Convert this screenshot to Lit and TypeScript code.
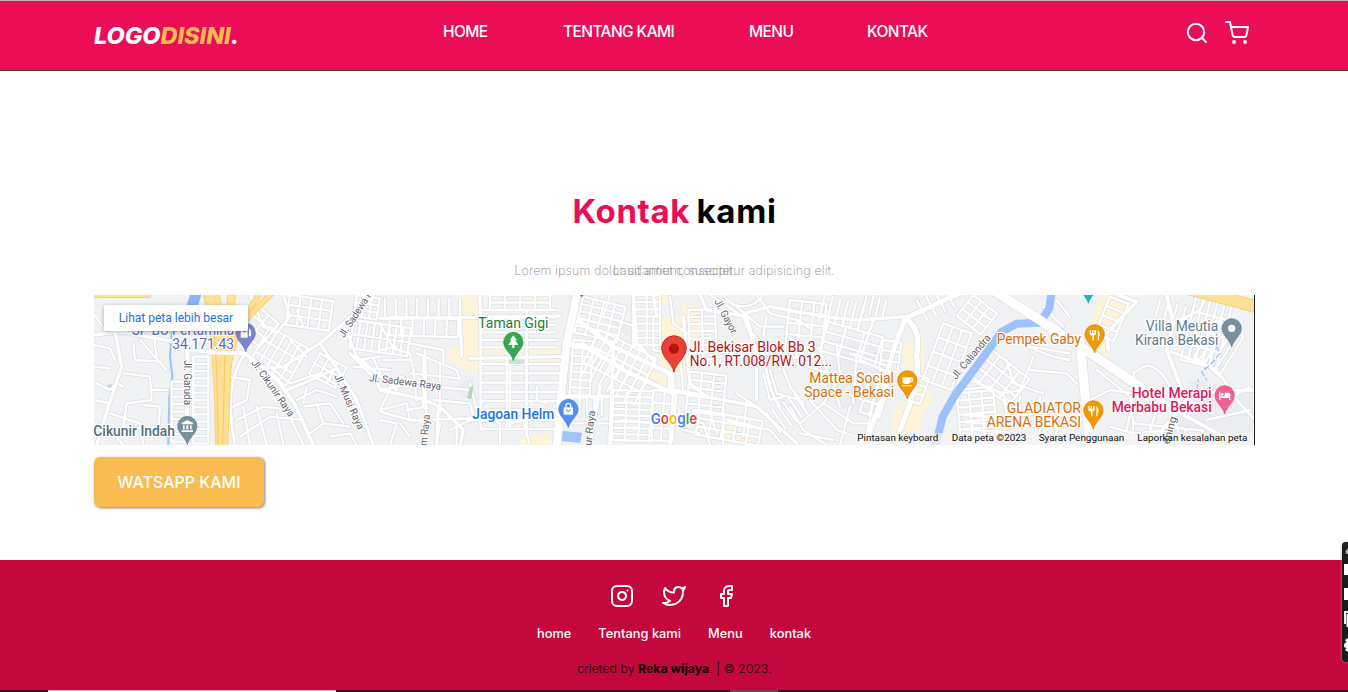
import { LitElement, html, svg, css } from "lit";
import { customElement } from "lit/decorators.js";

const FONT = css`Inter, "Open Sans", sans-serif`;

type Road = [number, string];

/* Parallel streets plus their cross streets, rotated around the block's corner. */
function block(x: number, y: number, w: number, h: number, nx: number, ny: number, deg = 0): string {
  const a = (deg * Math.PI) / 180;
  const c = Math.cos(a);
  const s = Math.sin(a);
  const p = (u: number, v: number) => `${(x + u * c - v * s).toFixed(1)} ${(y + u * s + v * c).toFixed(1)}`;
  let d = "";
  for (let i = 0; i <= nx; i++) {
    const u = (w * i) / Math.max(nx, 1);
    if (nx > 0) d += `M${p(u, 0)}L${p(u, h)}`;
  }
  for (let j = 0; j <= ny; j++) {
    const v = (h * j) / Math.max(ny, 1);
    if (ny > 0) d += `M${p(0, v)}L${p(w, v)}`;
  }
  return d;
}

const STREETS: Road[] = [
  [7, block(310, 200, 45, 260, 1, 12)],
  [7, block(245, 275, 45, 180, 1, 8)],
  [7, "M12 165L60 175L75 210M12 230L60 235M15 75L50 130M60 60L95 130M130 160L135 210L215 215M100 250L180 260L185 330L110 340M185 300L230 300M12 330L60 340M60 370L150 400L160 465M110 340L100 410L200 420M70 430L100 465M150 150L230 240M190 120L200 200"],
  [7, "M160 345L210 350L205 410M20 280L60 300L80 280L100 290M12 400L45 410"],
  [7, block(540, 110, 130, 130, 5, 3, 30)],
  [7, block(505, 50, 80, 90, 2, 3, 40)],
  [7, block(600, 15, 130, 90, 4, 3, 8)],
  [7, "M480 15L520 110L560 130M580 15L600 80L560 130M540 230L600 280L690 250L760 300M640 110L620 60M650 200L600 150"],
  [7, "M415 260L480 270L470 330L430 350M440 390L520 350L600 360M450 440L540 380L640 390M460 350L480 465M500 350L530 465M560 370L580 465M600 380L640 465M640 350L720 340L760 400M620 330L680 300L740 320M680 340L700 400L660 430M700 400L780 410M720 440L780 430L800 465M650 290L640 340"],
  [7, block(690, 190, 90, 70, 3, 2, 28)],
  [7, block(790, 90, 175, 85, 8, 2, 8)],
  [7, block(800, 15, 70, 65, 3, 3, 8)],
  [7, "M800 210L870 200M790 230L900 240M820 210L835 250M850 205L870 250M900 300L870 360L950 340L960 390L1030 400M870 390L920 400L900 465M950 360L1010 350L1000 310M1000 400L1010 465M1050 400L1040 465M930 400L960 440"],
  [7, block(885, 25, 225, 60, 7, 0)],
  [7, block(900, 80, 205, 55, 6, 1, 2)],
  [7, "M870 100L910 175L960 190L970 240M960 160L1060 180L1060 220M870 180L920 170M880 210L960 210M980 190L1100 240L1110 270M960 250L1110 265M1000 195L1000 350M1050 220L1050 370M970 240L980 330M930 260L1030 290L1140 300M1030 330L1140 340L1150 380"],
  [7, block(1172, 60, 225, 112, 0, 5)],
  [7, block(1172, 222, 245, 195, 0, 7)],
  [7, block(1250, 200, 60, 210, 1, 0)],
  [7, block(1200, 15, 180, 45, 4, 2)],
  [8, "M1172 30L1172 420M1310 60L1310 440"],
  [7, "M1140 280L1160 360L1200 380M1110 385L1300 370M1080 420L1140 390L1230 395L1230 465M1260 400L1300 390L1320 465M1340 290L1340 330L1370 340M1100 400L1100 465"],
  [7, block(1450, 150, 60, 165, 2, 7, 4)],
  [7, block(1425, 315, 110, 60, 5, 0)],
  [7, block(1480, 20, 130, 110, 4, 5, 14)],
  [7, block(1530, 120, 190, 110, 7, 2, 27)],
  [7, block(1510, 190, 180, 80, 6, 0, 28)],
  [7, block(1570, 300, 120, 150, 3, 8, 2)],
  [7, block(1630, 15, 80, 150, 2, 7)],
  [7, block(1690, 300, 70, 150, 2, 4, 5)],
  [7, "M1740 20L1750 100L1790 130M1690 80L1690 180L1800 200M1770 190L1780 310M1750 250L1750 300L1770 310M1560 15L1540 80L1640 110M1440 400L1560 400M1600 390L1700 400"],
  [7, block(1795, 60, 80, 150, 2, 7, -2)],
  [7, block(1800, 245, 110, 120, 3, 5, 6)],
  [7, "M1900 15C1930 60 1990 60 2020 15M1860 15L1960 80L1990 160L2020 200M1940 50L2010 110L2080 110M2000 15L2040 70L2120 90L2170 120M2030 80L2020 140L2070 240M2000 180C2010 140 2060 170 2070 210L2100 290L2140 340M2040 240L2060 310L2130 330L2150 370M2020 250L2040 330L2080 320"],
  [7, block(2100, 30, 110, 170, 3, 5, 6)],
  [7, block(2205, 15, 120, 80, 5, 0, 14)],
  [7, block(2215, 95, 170, 90, 3, 3, 16)],
  [7, block(2330, 15, 60, 55, 3, 0, 12)],
  [7, "M2120 220L2220 250L2250 350M2240 160L2250 260L2200 340L2130 400M2280 190L2400 230M2240 300L2350 340L2330 430M2160 330L2240 420L2300 440M2100 350L2140 420L2210 465M2200 340L2290 400L2350 400M2300 190L2290 340M2280 350L2250 465M2130 430L2230 450"],
  [7, block(1830, 360, 190, 75, 5, 3, 10)],
  [7, block(2030, 370, 100, 70, 5, 0, -35)],
  [7, "M1760 380L1840 400L1860 465M1810 360L1860 370L1880 430M1780 420L1830 430M1910 390L2040 420L2080 465M1970 330L1960 440M1900 360L1900 465M1940 310L2000 350"],
  [7, block(2380, 150, 55, 90, 1, 3, 8)],
  [7, block(2340, 260, 60, 110, 2, 3, 16)],
  [7, block(2470, 250, 50, 80, 1, 3, 20)],
  [7, block(2560, 100, 90, 180, 3, 4, 20)],
  [7, block(2480, 30, 90, 70, 3, 0, -28)],
  [7, block(2600, 310, 110, 130, 3, 6, -5)],
  [7, block(2700, 175, 150, 100, 4, 3, 38)],
  [7, block(2650, 15, 90, 80, 3, 3, 38)],
  [7, "M2610 300L2700 290L2780 350L2850 330M2640 270L2740 310L2790 300L2830 200M2750 210L2770 280L2860 310M2810 170L2890 200L2940 210M2820 240L2930 250L2960 280M2790 130L2820 170L2940 190M2870 110L2890 150M2860 50L2920 110M2900 30L2940 80M2740 310L2750 380L2960 360M2740 410L2950 405M2790 320L2790 440M2850 320L2850 430M2900 360L2900 440"],
  [7, block(3060, 20, 60, 120, 1, 4, 22)],
  [7, block(2620, 375, 140, 85, 0, 4, 4)],
  [7, "M3130 250L3160 230C3190 220 3220 250 3240 290L3280 350L3370 370M3130 250L3140 290M3020 240L3120 320L3130 400M3000 330L3060 300L3130 310M3060 410L3130 430L3240 420M3130 330L3100 465M3210 330L3180 420M3260 400L3270 465M3390 340L3480 290M3350 390L3480 360"],
  [7, block(3320, 15, 110, 200, 5, 4, 14)],
  [7, block(3380, 90, 95, 130, 5, 1, 32)],
  [7, block(3210, 30, 80, 50, 3, 0, 15)],
  [7, block(3130, 400, 210, 55, 4, 1, 6)],
  [10, "M12 135L90 125L280 160L300 182L465 190"],
  [10, "M75 125L95 230L55 350L20 465"],
  [12, "M292 175L292 465"],
  [12, "M465 190L560 265L615 345L670 465"],
  [9, "M462 195C420 260 410 340 435 465"],
  [10, "M850 20L760 100L690 160L740 235L800 330L850 465"],
  [9, "M690 160L580 230L520 235M740 235L640 280L590 300M770 120L800 200L920 300"],
  [10, "M780 190L860 270L870 300L990 325L1050 350L1120 420L1110 465"],
  [8, "M870 300L940 285M870 365L960 390L1170 385"],
  [10, "M870 85L1110 82L1410 78M1110 82L1115 200M1140 205L1410 200M1170 15L1172 100"],
  [9, "M1005 180L1010 465M1260 170L1260 410M1045 350L1040 465"],
  [24, "M1462 10L1430 160L1415 300L1400 470"],
  [14, "M1440 165L1480 165L1610 245L1750 310M1470 95L1570 170L1740 250L1740 300L1850 320"],
  [11, "M1630 15L1640 160L1690 210M1570 180L1560 465M1530 290L1500 465M1410 320L1560 320"],
  [10, "M1690 15L1700 80M1780 80L1800 280L1850 320L2000 350L2120 460M1750 310L1740 465"],
  [10, "M1830 15L1850 60L1970 80L2000 190M1960 70L2040 50L2200 80L2300 90L2450 80"],
  [9, "M1980 130C2040 150 2010 270 2070 350M2000 190L2000 330M2215 90L2190 180L2220 270M2350 90L2310 210L2400 250"],
  [15, "M2610 10L2445 85L2410 180L2370 340L2325 465"],
  [16, "M2445 85C2490 110 2485 160 2480 200C2490 260 2470 320 2430 420"],
  [28, "M2720 8L2960 162L3150 290"],
  [28, "M2970 155L2980 260L3000 470"],
  [11, "M3150 290L3290 380L3420 450M3085 15L3140 35L3050 130L3055 180"],
  [12, "M3230 15L3250 100L3230 180L3260 260L3290 330L3210 430M3260 310L3495 300"],
  [9, "M3230 180L3360 230L3390 260M3395 260L3440 330L3495 390M3260 95L3330 60L3350 15"],
];

const HIGHWAYS: Road[] = [
  [30, "M355 10C378 90 380 180 386 260S390 400 392 470"],
  [22, "M425 10L415 120C413 220 405 370 402 470"],
  [14, "M378 10L400 90L402 460"],
  [14, "M545 10L475 80C435 130 420 180 408 290"],
  [12, "M510 10L440 110C425 150 418 200 410 240"],
  [12, "M12 16L175 16"],
  [34, "M3280 -8L3510 53"],
];

const SAND = [
  "M1105 15H1165V180H1240V172H1410V190H1170V245L1120 235L1070 200L1080 172L1105 170Z",
  "M1170 206H1250V222H1170ZM1312 208H1410V222H1312ZM1312 175H1408V192H1312ZM1180 15H1230V28H1180ZM1300 15H1380L1360 40H1310Z",
  "M1295 435H1380V465H1290ZM1640 15H1750V42H1660ZM1710 80H1830V125H1840V160H1790V190H1800V260L1710 240ZM1650 230L1740 260V285L1690 290ZM1770 40L1820 50L1840 90H1780Z",
  "M1890 390L1940 385V430L1990 440L1980 460L1900 450Z",
  "M2430 160L2500 150V260L2530 330L2500 370L2490 420L2400 440L2410 360L2460 320L2450 240Z",
  "M3030 15H3140L3120 60L3080 100L3060 140L3000 120ZM2990 170L3050 160L3060 240L3000 215Z",
];

const INK = {
  green: "#188038",
  blue: "#1a73e8",
  red: "#b31412",
  orange: "#d56e0c",
  slate: "#607d8b",
  pink: "#e0185e",
  violet: "#5c6bc0",
};

/* x start, x end, baseline, colour, weight, text */
const LABELS: [number, number, number, string, number, string][] = [
  [125, 432, 136, INK.violet, 400, "SP BU Pertamina"],
  [247, 432, 177, INK.violet, 400, "34.171.43"],
  [10, 255, 437, "#546e7a", 500, "Cikunir Indah"],
  [1165, 1375, 114, INK.green, 400, "Taman Gigi"],
  [1147, 1393, 387, INK.blue, 500, "Jagoan Helm"],
  [1798, 2177, 186, INK.red, 400, "Jl. Bekisar Blok Bb 3"],
  [1799, 2226, 228, INK.red, 400, "No.1, RT.008/RW. 012..."],
  [2158, 2412, 280, INK.orange, 400, "Mattea Social"],
  [2143, 2412, 321, INK.orange, 400, "Space - Bekasi"],
  [2720, 2973, 163, INK.orange, 400, "Pempek Gaby"],
  [2750, 2973, 369, INK.orange, 400, "GLADIATOR"],
  [2690, 2973, 411, INK.orange, 400, "ARENA BEKASI"],
  [3167, 3385, 123, INK.slate, 400, "Villa Meutia"],
  [3135, 3385, 165, INK.slate, 400, "Kirana Bekasi"],
  [3125, 3365, 324, INK.pink, 500, "Hotel Merapi"],
  [3065, 3365, 366, INK.pink, 500, "Merbabu Bekasi"],
];

/* x, y, angle, length, text */
const STREET_NAMES: [number, number, number, number, string][] = [
  [762, 145, -57, 160, "Jl. Sadewa R"],
  [283, 211, 90, 134, "Jl. Garuda"],
  [483, 218, 55, 200, "Jl. Cikunir Raya"],
  [732, 258, 66, 178, "Jl. Musi Raya"],
  [836, 273, 7, 218, "Jl. Sadewa Raya"],
  [1010, 468, -84, 94, "m Raya"],
  [1504, 468, -84, 106, "ur Raya"],
  [1872, 34, 62, 112, "Jl. Gayor"],
  [2598, 270, -50, 164, "Jl. Caliandra"],
  [3238, 464, -75, 84, "ening"],
];

const LEGAL: [number, number, string][] = [
  [2302, 2545, "Pintasan keyboard"],
  [2585, 2809, "Data peta ©2023"],
  [2846, 3103, "Syarat Penggunaan"],
  [3142, 3472, "Laporkan kesalahan peta"],
];

const fork = svg`<path d="M-15 -69V-58Q-15 -53 -10 -53H-7V-38H-2V-53Q4 -53 4 -58V-69H-1V-60H-4V-69H-8V-60H-11V-69ZM9 -38V-69Q16 -65 16 -50H13V-38Z" fill="#fff"/>`;

const PINS: [number, number, number, string, string, unknown][] = [
  [467, 185, 1, "#7986cb", "#5c6bc0", svg`<path d="M-15 -42V-58L-8 -74H6V-42ZM10 -70L16 -64V-46H10Z" fill="#fff"/><path d="M-6 -66H2V-59H-9Z" fill="#7986cb"/>`],
  [292, 464, 1, "#78909c", "#607d8b", svg`<path d="M0 -74L17 -65V-61H-17V-65ZM-13 -58H-8V-46H-13ZM-3 -58H3V-46H-3ZM8 -58H13V-46H8ZM-17 -43H17V-38H-17Z" fill="#fff"/>`],
  [1270, 212, 1, "#34a853", "#1e8e3e", svg`<path d="M0 -76L11 -61H6L15 -47H3V-38H-3V-47H-15L-6 -61H-11Z" fill="#fff"/>`],
  [1435, 413, 1, "#4f8ff7", "#3b78e7", svg`<path d="M-14 -61H14V-39H-14Z" fill="#fff"/><path d="M-7 -61V-66A7 7 0 0 1 7 -66V-61" stroke="#fff" stroke-width="4" fill="none"/><path d="M-6 -55A6 6 0 0 0 6 -55" stroke="#4285f4" stroke-width="3" fill="none"/>`],
  [1752, 246, 1.28, "#ea4335", "#c5221f", svg`<circle cy="-55" r="12" fill="#b31412"/>`],
  [2452, 327, 1, "#f29900", "#e37400", svg`<path d="M-15 -65H11A7 7 0 0 1 11 -50H9Q6 -45 1 -45H-6Q-15 -46 -15 -55ZM10 -61V-54A3.500 3.500 0 0 0 10 -61ZM-16 -41H14V-38H-16Z" fill="#fff"/>`],
  [3014, 189, 1, "#f29900", "#e37400", fork],
  [3010, 417, 1, "#f29900", "#e37400", fork],
  [3425, 171, 1, "#78909c", "#607d8b", svg`<circle cy="-56" r="11" fill="#fff"/>`],
  [3404, 372, 1, "#f06292", "#e2447c", svg`<path d="M-17 -67H-13V-53H0V-64H12Q17 -64 17 -59V-42H13V-48H-13V-42H-17Z" fill="#fff"/><circle cx="-7" cy="-59" r="4" fill="#fff"/>`],
  [2995, 40, 1, "#12b5cb", "#129eaf", ""],
];

@customElement("area-map")
class AreaMap extends LitElement {
  static styles = css`
    :host { display: block; position: relative; height: 150px; overflow: hidden; background: #f1f2f4; }
    .map { display: block; width: 1161px; height: 150px; font-family: Roboto, sans-serif; }
    .casing { stroke: #dcdfe3; fill: none; }
    .lane { stroke: #fff; fill: none; }
    .edge { stroke: #f5ca62; fill: none; }
    .highway { stroke: #fde093; fill: none; }
    .water { stroke: #9dc1fa; fill: none; }
    .halo { paint-order: stroke; stroke: #fff; stroke-width: 7px; stroke-linejoin: round; }
    .label { font-size: 42px; }
    .street { font-size: 31px; fill: #5f6368; }
    .legal { font-size: 29px; fill: #111; }
    .brand { font: 600 45px Inter, sans-serif; }
    .open {
      position: absolute; left: 10px; top: 10px; width: 144px; height: 26px;
      display: flex; align-items: center; justify-content: center;
      font: 12px Roboto, sans-serif; color: #1a73e8; background: #fff;
      border-radius: 2px; box-shadow: 0 1px 4px rgba(0, 0, 0, .3); text-decoration: none;
    }
  `;

  render() {
    return html`
      <svg class="map" viewBox="12 15 3483 450" preserveAspectRatio="none" role="img" aria-label="Peta">
        <path d="M2240 150L2420 180L2360 400L2200 330ZM1540 80L1640 100V150L1560 110ZM3300 270L3495 300V440H3240ZM1110 280L1150 260L1160 340L1100 310Z" fill="#ebedf0"/>
        ${SAND.map((d) => svg`<path d=${d} fill="#fdf4da"/>`)}
        <path d="M50 285L68 282L65 297L52 300Z" fill="#c5dcd8"/>
        <path d="M302 10H335L325 45H290Z" fill="#8ab4f8"/>
        <path class="water" stroke-width="6" d="M290 45L245 130L240 200L247 260L238 320L235 465"/>
        <g stroke-linejoin="round" stroke-linecap="round">
          ${STREETS.map(([w, d]) => svg`<path class="casing" stroke-width=${w + 4.5} d=${d}/>`)}
          ${STREETS.map(([w, d]) => svg`<path class="lane" stroke-width=${w} d=${d}/>`)}
          <path class="water" stroke-width="24" d="M2536 470L2558 380L2595 315L2670 215L2735 125L2780 101L2850 98L2878 55L2884 10"/>
          <path class="lane" stroke-width="28" d="M2790 52L2900 123"/>
          <path class="water" stroke-width="4" stroke-dasharray="16 9" d="M3380 120L3375 160L3390 190L3360 225L3335 245L3350 270M3320 300L3325 270"/>
          ${HIGHWAYS.map(([w, d]) => svg`<path class="edge" stroke-width=${w + 4} d=${d}/>`)}
          ${HIGHWAYS.map(([w, d]) => svg`<path class="highway" stroke-width=${w} d=${d}/>`)}
          <path class="edge" stroke-width="3" d="M370 120C382 200 382 330 384 465M405 190L398 465"/>
          <path class="lane" stroke-width="11" d="M355 187L465 190"/>
        </g>
        <path d="M1257 208H1302V222H1257Z" fill="#c7e6cf"/>
        <path d="M1140 291L1150 287L1144 328L1131 324Z" fill="#a8dab5"/>
        <path d="M1418 423L1476 428L1471 459L1415 453Z" fill="#9fc3fb"/>
        <path d="M1469 15H1481L1475 22Z" fill="#4285f4"/>
        <path d="M2265 430H3495V465H2265Z" fill="#f5f5f5" fill-opacity=".76"/>
        ${STREET_NAMES.map(([x, y, a, len, t]) => svg`
          <text class="street halo" transform="translate(${x} ${y}) rotate(${a})" textLength=${len} lengthAdjust="spacingAndGlyphs">${t}</text>`)}
        ${PINS.map(([x, y, k, fill, edge, glyph]) => svg`
          <g transform="translate(${x} ${y}) scale(${k})">
            <path d="M0 0C-5 -22 -29 -34 -29 -56A29 29 0 1 1 29 -56C29 -34 5 -22 0 0Z" fill=${fill} stroke=${edge} stroke-width="2"/>
            ${glyph}
          </g>`)}
        ${LABELS.map(([x1, x2, y, c, w, t]) => svg`
          <text class="label halo" x=${x1} y=${y} fill=${c} font-weight=${w} textLength=${x2 - x1} lengthAdjust="spacingAndGlyphs">${t}</text>`)}
        ${LEGAL.map(([x1, x2, t]) => svg`
          <text class="legal" x=${x1} y="453" textLength=${x2 - x1} lengthAdjust="spacingAndGlyphs">${t}</text>`)}
        <text class="brand halo" x="1682" y="402" textLength="140" lengthAdjust="spacingAndGlyphs"><tspan fill="#4285f4">G</tspan><tspan fill="#ea4335">o</tspan><tspan fill="#fbbc04">o</tspan><tspan fill="#4285f4">g</tspan><tspan fill="#34a853">l</tspan><tspan fill="#ea4335">e</tspan></text>
        <path d="M3492 15H3495V465H3492Z" fill="#222"/>
      </svg>
      <a class="open">Lihat peta lebih besar</a>
    `;
  }
}

@customElement("app-root")
class AppRoot extends LitElement {
  static styles = css`
    :host { display: block; position: relative; height: 692px; overflow: hidden; background: #fff; font-family: ${FONT}; color: #000; }
    .page { display: flex; flex-direction: column; height: 692px; }
    .bar {
      box-sizing: border-box; height: 71px; flex: none; display: grid;
      grid-template-columns: 349px 1fr auto; align-items: start; padding: 0 99px 0 94px;
      background: #eb0d55; border-top: 1px solid #c9b1b5; border-bottom: 1px solid #5a3a1e; color: #fff;
    }
    .logo { margin-top: 20px; font-size: 23.500px; line-height: 30px; font-weight: 800; font-style: italic; letter-spacing: -.05px; white-space: nowrap; }
    .logo span { color: #f8bc52; }
    .nav { display: grid; grid-template-columns: 120px 186px 118px auto; justify-content: start; margin-top: 19px; font-size: 15.500px; line-height: 24px; font-weight: 450; letter-spacing: -.6px; white-space: nowrap; }
    .tools { display: flex; gap: 16px; margin-top: 19px; }
    .icon { display: block; fill: none; stroke: #fff; stroke-width: 2; stroke-linecap: round; stroke-linejoin: round; }
    .search { margin-top: 1px; }
    .contact { flex: none; box-sizing: border-box; height: 489px; padding: 116px 93px 0 94px; }
    .title { margin: 0; text-align: center; font-size: 33px; line-height: 49px; font-weight: 700; letter-spacing: .65px; word-spacing: -2px; white-space: nowrap; }
    .title span { color: #eb0d55; }
    .lead { margin: 35px 0 24px; height: 0; text-align: center; font-size: 12.500px; line-height: 0; font-weight: 200; letter-spacing: .13px; color: #8c8c8c; }
    .wa {
      display: flex; align-items: center; justify-content: center; width: 170px; height: 50px; margin-top: 12px;
      border-radius: 6px; background: #f8bc52; color: #fff; font-size: 16px; font-weight: 450; box-shadow: 1px 1px 3px rgba(0, 0, 0, .5);
    }
    .foot { flex: none; box-sizing: border-box; height: 130px; padding-top: 24px; background: #c4073d; display: flex; flex-direction: column; align-items: center; }
    .social { display: flex; gap: 28px; }
    .links { display: flex; gap: 27px; margin-top: 16px; font-size: 12.800px; line-height: 20px; font-weight: 450; letter-spacing: .03px; color: #fff; white-space: nowrap; }
    .credit { margin-top: 15px; padding-left: 1px; font-size: 12.200px; line-height: 20px; font-weight: 300; letter-spacing: .08px; white-space: nowrap; }
    .credit b { font-weight: 700; }
    .shelf { flex: none; height: 2px; background: #2b1a1e; display: grid; grid-template-columns: 288px 48px; column-gap: 394px; padding-left: 48px; }
    .sheet { box-sizing: border-box; background: #fff; border-top: 1px solid #c5bcbc; }
    .thumb { background: #65484f; }
    .dock { position: absolute; right: 0; top: 542px; width: 6px; height: 120px; background: #1c1c1c; border-radius: 4px 0 0 4px; box-shadow: 0 0 3px rgba(255, 255, 255, .6), 0 0 3px rgba(0, 0, 0, .4); }
    .dock svg { display: block; }
  `;

  render() {
    return html`
      <div class="page">
        <header class="bar">
          <div class="logo">LOGO<span>DISINI</span>.</div>
          <nav class="nav"><span>HOME</span><span>TENTANG KAMI</span><span>MENU</span><span>KONTAK</span></nav>
          <div class="tools">
            <svg class="icon search" width="24" height="24" viewBox="0 0 24 24"><circle cx="11" cy="11" r="8.200"/><path d="M21 21l-4.200-4.200"/></svg>
            <svg class="icon" width="24" height="26" viewBox="0 0 24 24"><circle cx="9" cy="21" r="1"/><circle cx="20" cy="21" r="1"/><path d="M1 1h4l2.680 13.390a2 2 0 0 0 2 1.610h9.720a2 2 0 0 0 2-1.610L23 6H6"/></svg>
          </div>
        </header>
        <section class="contact">
          <h2 class="title"><span>Kontak</span> kami</h2>
          <p class="lead">Lorem ipsum dolor sit amet consectetur adipisicing elit.<br>Laudantium, suscipit.</p>
          <area-map></area-map>
          <a class="wa">WATSAPP KAMI</a>
        </section>
        <footer class="foot">
          <div class="social">
            <svg class="icon" width="24" height="24" viewBox="0 0 24 24"><rect x="2" y="2" width="20" height="20" rx="5"/><path d="M16 11.370A4 4 0 1 1 12.630 8 4 4 0 0 1 16 11.370zM17.500 6.500h.01"/></svg>
            <svg class="icon" width="24" height="24" viewBox="0 0 24 24"><path d="M23 3a10.900 10.900 0 0 1-3.140 1.530 4.480 4.480 0 0 0-7.860 3v1A10.660 10.660 0 0 1 3 4s-4 9 5 13a11.640 11.640 0 0 1-7 2c9 5 20 0 20-11.500a4.500 4.500 0 0 0-.08-.830A7.720 7.720 0 0 0 23 3z"/></svg>
            <svg class="icon" width="24" height="24" viewBox="0 0 24 24"><path d="M18 2h-3a5 5 0 0 0-5 5v3H7v4h3v8h4v-8h3l1-4h-4V7a1 1 0 0 1 1-1h3z"/></svg>
          </div>
          <div class="links"><span>home</span><span>Tentang kami</span><span>Menu</span><span>kontak</span></div>
          <div class="credit">crieted by <b>Reka wijaya</b>. | © 2023.</div>
        </footer>
        <div class="shelf"><div class="sheet"></div><div class="thumb"></div></div>
      </div>
      <div class="dock">
        <svg width="6" height="120" viewBox="0 0 6 120">
          <path d="M6 6L3.500 9L4 12H6Z" fill="#aaa"/>
          <path d="M2 22H6V33H2ZM2 46H6V58H2Z" fill="#fff"/>
          <path d="M2 69H6V71H4V82H2Z" fill="#eee"/><path d="M4.500 72H6V85H4.500Z" fill="#fff"/>
          <path d="M6 96L3 98L4.500 100L2 102V105L4.500 106L3 108L6 110Z" fill="#fff"/>
        </svg>
      </div>
    `;
  }
}
